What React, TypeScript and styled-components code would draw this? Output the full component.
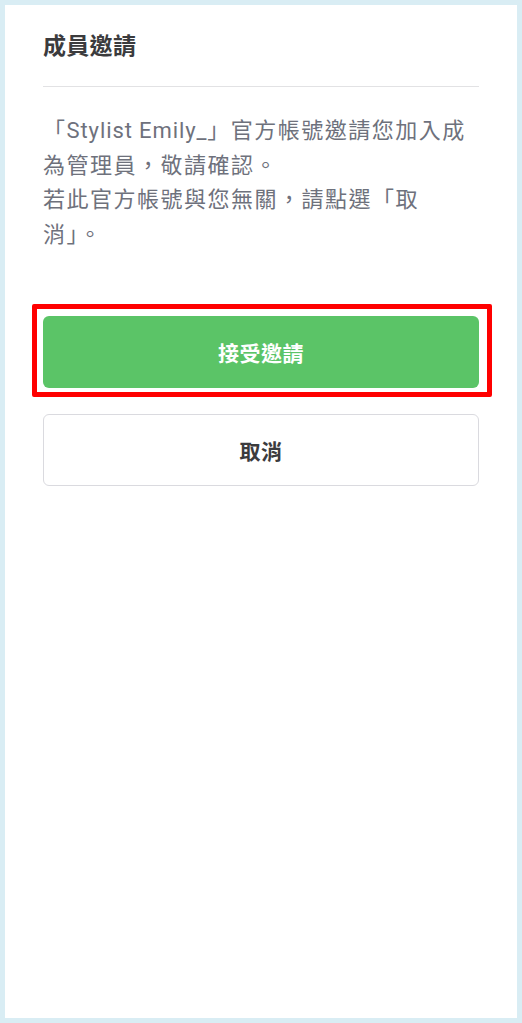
import React from 'react'
import styled, { createGlobalStyle } from 'styled-components'

const GlobalStyle = createGlobalStyle`
  html, body {
    margin: 0;
    padding: 0;
    background: #ffffff;
  }
  body {
    font-family: Roboto, "Noto Sans CJK TC", "Noto Sans", sans-serif;
  }
`

const Frame = styled.div`
  box-sizing: border-box;
  width: 522px;
  height: 1023px;
  border: 5px solid #d9edf4;
  background: #ffffff;
  padding: 0 38px;
  display: flex;
  flex-direction: column;
`

const Header = styled.div`
  padding: 26px 0 23px;
  border-bottom: 1.5px solid #e2e2e4;
`

const Title = styled.h1`
  margin: 0;
  font-size: 23px;
  line-height: 32px;
  font-weight: 700;
  color: #3b3b3d;
  letter-spacing: 0.3px;
`

const Message = styled.p`
  margin: 27px 10px 0 0;
  font-size: 22px;
  line-height: 34.5px;
  font-weight: 400;
  color: #6e717c;
  letter-spacing: 1.5px;
`

const Name = styled.span`
  letter-spacing: 0.9px;
`

const Actions = styled.div`
  margin-top: 64px;
  display: flex;
  flex-direction: column;
  gap: 26px;
`

const Highlight = styled.div`
  position: relative;

  &::after {
    content: '';
    position: absolute;
    top: -12px;
    bottom: -9px;
    left: -11px;
    right: -13px;
    border: 5px solid #ff0000;
    border-radius: 2px;
    pointer-events: none;
  }
`

const Button = styled.button<{ $primary?: boolean }>`
  box-sizing: border-box;
  width: 100%;
  height: 72px;
  border-radius: 6px;
  border: ${(p) => (p.$primary ? 'none' : '1.5px solid #dadadf')};
  background: ${(p) => (p.$primary ? '#5bc467' : '#ffffff')};
  color: ${(p) => (p.$primary ? '#ffffff' : '#3b3b3d')};
  font-family: inherit;
  font-size: 21px;
  font-weight: 700;
  letter-spacing: 0.5px;
  cursor: pointer;
  display: flex;
  align-items: center;
  justify-content: center;
`

export default function App() {
  return (
    <>
      <GlobalStyle />
      <Frame>
        <Header>
          <Title>成員邀請</Title>
        </Header>
        <Message>
          「<Name>Stylist Emily_</Name>」官方帳號邀請您加入成為管理員，敬請確認。
          <br />
          若此官方帳號與您無關，請點選「取消」。
        </Message>
        <Actions>
          <Highlight>
            <Button $primary>接受邀請</Button>
          </Highlight>
          <Button>取消</Button>
        </Actions>
      </Frame>
    </>
  )
}
